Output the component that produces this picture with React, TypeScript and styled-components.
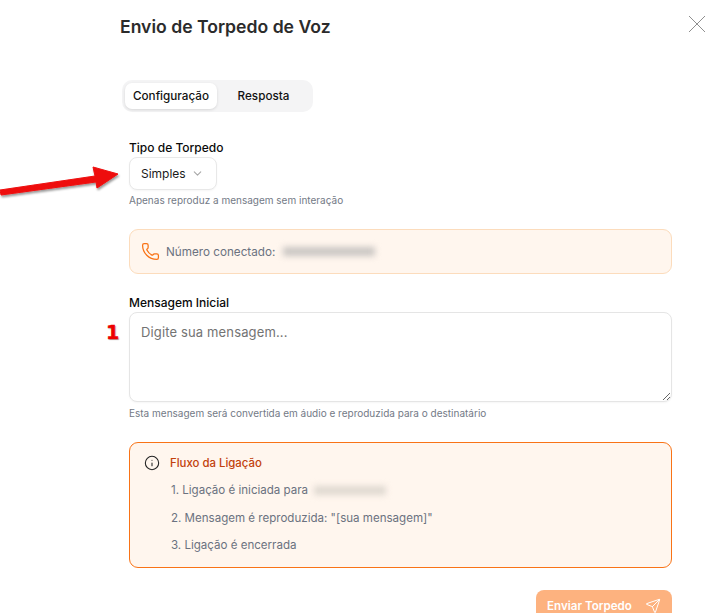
import * as React from "react";
import styled, { createGlobalStyle } from "styled-components";
import { ChevronDown, Info, Phone, Send } from "lucide-react";

const GlobalStyle = createGlobalStyle`
  html, body {
    margin: 0;
    padding: 0;
    background: #fff;
  }
  body {
    font-family: Inter, "Noto Sans", sans-serif;
    color: #0a0a0a;
  }
`;

const Page = styled.div`
  position: relative;
  width: 706px;
  height: 613px;
  overflow: hidden;
  background: #fff;
`;

const Header = styled.div`
  height: 80px;
  padding: 15px 0 0 120px;
  box-sizing: border-box;
  display: flex;
  justify-content: space-between;
  align-items: flex-start;
`;

const Title = styled.h2`
  margin: 0;
  font-size: 17.6px;
  line-height: 24px;
  font-weight: 600;
  color: #2b2b2b;
`;

const Close = styled.button`
  padding: 0;
  border: 0;
  background: none;
  display: flex;
  svg {
    stroke: #8f8f8f;
  }
`;

const Tabs = styled.div`
  margin-left: 122px;
  width: 191px;
  height: 32px;
  box-sizing: border-box;
  padding: 3px;
  background: #f4f4f5;
  border-radius: 10px;
  display: flex;
`;

const Tab = styled.div<{ $active?: boolean }>`
  height: 26px;
  display: flex;
  align-items: center;
  justify-content: center;
  font-size: 11.7px;
  font-weight: 500;
  color: #111;
  border-radius: 7px;
  width: ${(p) => (p.$active ? "93px" : "94px")};
  background: ${(p) => (p.$active ? "#fff" : "transparent")};
  box-shadow: ${(p) => (p.$active ? "0 1px 3px rgba(0,0,0,.12)" : "none")};
`;

const Content = styled.div`
  margin: 0 34px 0 129px;
  display: flex;
  flex-direction: column;
`;

const Label = styled.div<{ $top: number }>`
  margin-top: ${(p) => p.$top}px;
  font-size: 12px;
  line-height: 17px;
  font-weight: 500;
  color: #0a0a0a;
`;

const SelectBox = styled.div`
  width: 88px;
  height: 33px;
  margin-top: 1px;
  box-sizing: border-box;
  padding: 0 12px 0 11px;
  border: 1px solid #e8e8e8;
  border-radius: 8px;
  box-shadow: 0 1px 2px rgba(0,0,0,.04);
  background: #fff;
  display: flex;
  align-items: center;
  justify-content: space-between;
  font-size: 12px;
  color: #1a1a1a;
  svg {
    color: #a8a8a8;
    flex: none;
  }
`;

const Hint = styled.div<{ $top: number }>`
  margin-top: ${(p) => p.$top}px;
  font-size: 10px;
  line-height: 14px;
  color: #737a86;
`;

const PhoneBox = styled.div`
  height: 45px;
  margin-top: 22px;
  box-sizing: border-box;
  padding: 0 11px;
  background: #fff6ee;
  border: 1px solid #fcdcbc;
  border-radius: 9px;
  display: flex;
  align-items: center;
  font-size: 11.7px;
  color: #6b7280;
  svg {
    color: #f97316;
    margin-right: 6px;
  }
`;

const Blurred = styled.span<{ $w: number; $color: string; $gap: number }>`
  display: inline-block;
  width: ${(p) => p.$w}px;
  height: 9px;
  margin-left: ${(p) => p.$gap}px;
  background: ${(p) => p.$color};
  filter: blur(3px);
`;

const MessageInput = styled.textarea`
  display: block;
  width: 100%;
  height: 90px;
  margin-top: 1px;
  box-sizing: border-box;
  padding: 10px 11px;
  border: 1px solid #e5e5e5;
  border-radius: 8px;
  box-shadow: 0 1px 2px rgba(0,0,0,.04);
  font-family: inherit;
  font-size: 13px;
  letter-spacing: 0.14px;
  line-height: 18px;
  background: #fff;
  outline: none;
  &::placeholder {
    color: #737373;
    opacity: 1;
  }
`;

const Flow = styled.div`
  height: 126px;
  margin-top: 22px;
  box-sizing: border-box;
  padding: 12px 14px;
  background: #fff6ee;
  border: 1px solid #f97316;
  border-radius: 9px;
  display: flex;
  gap: 10px;
  svg {
    color: #222;
    flex: none;
  }
`;

const FlowBody = styled.div`
  display: flex;
  flex-direction: column;
`;

const FlowTitle = styled.div`
  font-size: 11.4px;
  line-height: 16px;
  font-weight: 500;
  color: #c2410c;
  margin-bottom: 6px;
`;

const FlowStep = styled.div`
  display: flex;
  align-items: center;
  padding-left: 1px;
  font-size: 11.55px;
  line-height: 27.5px;
  white-space: pre;
  color: #6b7280;
`;

const Footer = styled.div`
  margin: 22px 34px 0 0;
  display: flex;
  justify-content: flex-end;
`;

const SendButton = styled.button`
  width: 136px;
  height: 32px;
  padding: 0;
  border: 0;
  border-radius: 8px;
  background: #fdb27f;
  color: #fff;
  font-family: inherit;
  font-size: 11.6px;
  font-weight: 600;
  display: flex;
  align-items: center;
  justify-content: center;
  gap: 13px;
`;

const Annotation = styled.svg`
  position: absolute;
  left: 0;
  top: 160px;
`;

const Marker = styled.div`
  position: absolute;
  left: 106px;
  top: 320px;
  font-family: "DejaVu Sans", sans-serif;
  font-size: 19px;
  line-height: 24px;
  font-weight: 700;
  color: #ee0000;
  -webkit-text-stroke: 0.4px #ee0000;
  text-shadow: 1px 1px 1px rgba(0,0,0,.35);
`;

export default function App() {
  return (
    <Page>
      <GlobalStyle />
      <Header>
        <Title>Envio de Torpedo de Voz</Title>
        <Close>
          <svg width="18" height="18" viewBox="0 0 18 18" fill="none" strokeWidth="1">
            <path d="M1 1 L17 17 M17 1 L1 17" />
          </svg>
        </Close>
      </Header>
      <Tabs>
        <Tab $active>Configuração</Tab>
        <Tab>Resposta</Tab>
      </Tabs>
      <Content>
        <Label $top={27}>Tipo de Torpedo</Label>
        <SelectBox>
          Simples
          <ChevronDown size={13} />
        </SelectBox>
        <Hint $top={3}>Apenas reproduz a mensagem sem interação</Hint>
        <PhoneBox>
          <Phone size={19} strokeWidth={1.6} />
          Número conectado:
          <Blurred $w={92} $color="#c9c5c2" $gap={8} />
        </PhoneBox>
        <Label $top={20}>Mensagem Inicial</Label>
        <MessageInput placeholder="Digite sua mensagem..." />
        <Hint $top={4}>
          Esta mensagem será convertida em áudio e reproduzida para o destinatário
        </Hint>
        <Flow>
          <Info size={16} strokeWidth={1.6} />
          <FlowBody>
            <FlowTitle>Fluxo da Ligação</FlowTitle>
            <FlowStep>
              1. Ligação é iniciada para
              <Blurred $w={72} $color="#dfd8d0" $gap={6} />
            </FlowStep>
            <FlowStep>2. Mensagem é reproduzida: "[sua mensagem]"</FlowStep>
            <FlowStep>3. Ligação é encerrada</FlowStep>
          </FlowBody>
        </Flow>
      </Content>
      <Footer>
        <SendButton>
          Enviar Torpedo
          <Send size={16} strokeWidth={1.5} />
        </SendButton>
      </Footer>
      <Annotation width="125" height="45" viewBox="0 0 125 45">
        <defs>
          <filter id="arrowShadow" x="-10%" y="-30%" width="120%" height="160%">
            <feDropShadow dx="1" dy="2" stdDeviation="1.2" floodColor="#000" floodOpacity="0.4" />
          </filter>
        </defs>
        <path
          d="M0 30 L95 16 L93 7 L118 14 L97 28 L96 22 L1 35 Z"
          fill="#ee0b0b"
          stroke="#ee0b0b"
          strokeLinejoin="round"
          filter="url(#arrowShadow)"
        />
      </Annotation>
      <Marker>1</Marker>
    </Page>
  );
}
